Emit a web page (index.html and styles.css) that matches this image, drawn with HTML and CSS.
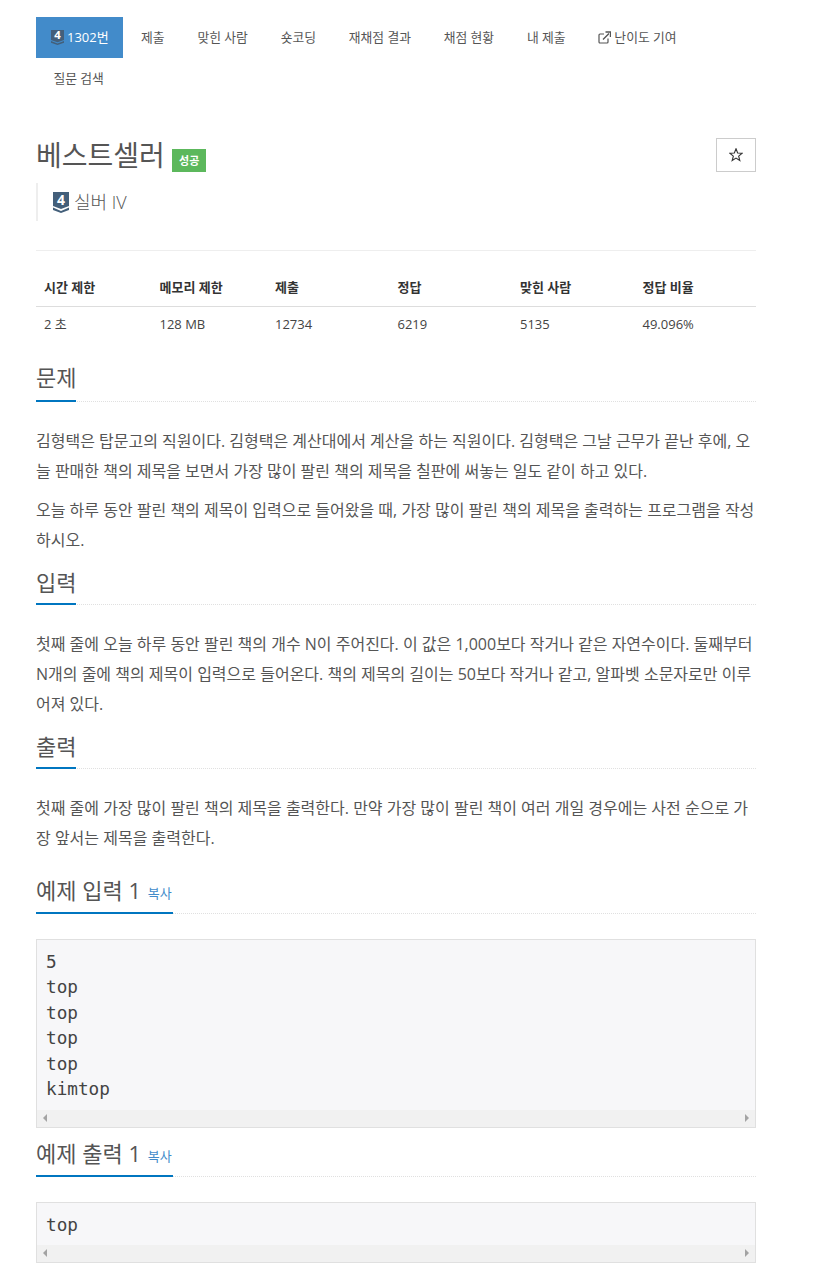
FILE: index.html
```html
<!DOCTYPE html>
<html lang="ko">
<head>
<meta charset="utf-8">
<title>베스트셀러</title>
<link rel="stylesheet" href="styles.css">
</head>
<body>
<div class="page">
  <ul class="nav">
    <li class="nav-item active"><svg class="tier tier-sm" viewBox="0 0 16 21" preserveAspectRatio="none"><path class="tier-body" d="M0 0H16V14L8 17L0 14Z"/><path class="tier-chev" d="M0 15.5L8 19L16 15.5V18L8 21L0 18Z"/><text class="tier-num" x="8" y="13">4</text></svg> 1302번</li>
    <li class="nav-item">제출</li>
    <li class="nav-item">맞힌 사람</li>
    <li class="nav-item">숏코딩</li>
    <li class="nav-item">재채점 결과</li>
    <li class="nav-item">채점 현황</li>
    <li class="nav-item">내 제출</li>
    <li class="nav-item"><svg class="ext" viewBox="0 0 13 13"><path d="M10 7.5V11a1 1 0 0 1-1 1H2a1 1 0 0 1-1-1V4a1 1 0 0 1 1-1h4" fill="none" stroke="currentColor" stroke-width="1.2"/><path d="M5 8.5L11 2.5M7.5 1H12.5V6" fill="none" stroke="currentColor" stroke-width="1.4"/></svg> 난이도 기여</li>
    <li class="nav-item">질문 검색</li>
  </ul>

  <header class="title-block">
    <div class="title-row">
      <h1 class="title">베스트셀러 <span class="badge">성공</span></h1>
      <button class="star" type="button" aria-label="즐겨찾기"><svg viewBox="0 0 14 14"><path d="M7 .8L8.65 5.03L13.18 5.29L9.66 8.17L10.82 12.56L7 10.1L3.18 12.56L4.34 8.17L.82 5.29L5.35 5.03Z" fill="none" stroke="#333" stroke-width="1.1"/></svg></button>
    </div>
    <div class="tier-line"><svg class="tier tier-lg" viewBox="0 0 16 21" preserveAspectRatio="none"><path class="tier-body" d="M0 0H16V14L8 17L0 14Z"/><path class="tier-chev" d="M0 15.5L8 19L16 15.5V18L8 21L0 18Z"/><text class="tier-num" x="8" y="13">4</text></svg><span class="tier-name">실버 IV</span></div>
  </header>

  <table class="info">
    <thead><tr><th class="c1">시간 제한</th><th class="c2">메모리 제한</th><th class="c3">제출</th><th class="c3">정답</th><th class="c3">맞힌 사람</th><th>정답 비율</th></tr></thead>
    <tbody><tr><td>2 초</td><td>128 MB</td><td>12734</td><td>6219</td><td>5135</td><td>49.096%</td></tr></tbody>
  </table>

  <section class="sec lead">
    <h2 class="head"><span class="head-text">문제</span></h2>
    <div class="body">
      <p>김형택은 탑문고의 직원이다. 김형택은 계산대에서 계산을 하는 직원이다. 김형택은 그날 근무가 끝난 후에, 오늘 판매한 책의 제목을 보면서 가장 많이 팔린 책의 제목을 칠판에 써놓는 일도 같이 하고 있다.</p>
      <p>오늘 하루 동안 팔린 책의 제목이 입력으로 들어왔을 때, 가장 많이 팔린 책의 제목을 출력하는 프로그램을 작성하시오.</p>
    </div>
  </section>
  <section class="sec">
    <h2 class="head"><span class="head-text">입력</span></h2>
    <div class="body">
      <p>첫째 줄에 오늘 하루 동안 팔린 책의 개수 N이 주어진다. 이 값은 1,000보다 작거나 같은 자연수이다. 둘째부터 N개의 줄에 책의 제목이 입력으로 들어온다. 책의 제목의 길이는 50보다 작거나 같고, 알파벳 소문자로만 이루어져 있다.</p>
    </div>
  </section>
  <section class="sec">
    <h2 class="head"><span class="head-text">출력</span></h2>
    <div class="body">
      <p>첫째 줄에 가장 많이 팔린 책의 제목을 출력한다. 만약 가장 많이 팔린 책이 여러 개일 경우에는 사전 순으로 가장 앞서는 제목을 출력한다.</p>
    </div>
  </section>
  <section class="sec sample first">
    <h2 class="head"><span class="head-text">예제 입력 1 <a class="copy">복사</a></span></h2>
    <div class="code">
      <pre>5
top
top
top
top
kimtop</pre>
      <div class="scroll"><i class="arr left"></i><i class="arr right"></i></div>
    </div>
  </section>
  <section class="sec sample">
    <h2 class="head"><span class="head-text">예제 출력 1 <a class="copy">복사</a></span></h2>
    <div class="code">
      <pre>top</pre>
      <div class="scroll"><i class="arr left"></i><i class="arr right"></i></div>
    </div>
  </section>
</div>
</body>
</html>
```
FILE: styles.css
```css
* { box-sizing: border-box; }
html, body { margin: 0; background: #fff; }
body {
  font-family: "Open Sans", "Noto Sans CJK KR", sans-serif;
  font-size: 13px;
  line-height: 1.42857;
  color: #333;
  overflow: hidden;
}
.page { width: 720px; margin-left: 36px; padding-top: 17px; }

.nav { list-style: none; margin: 0; padding: 0; display: flex; flex-wrap: wrap; }
.nav-item { height: 41px; margin-left: 2px; padding: 0 15.4px; color: #555; font-size: 12.8px; white-space: nowrap; display: flex; align-items: center; gap: 3px; }
.nav-item.active { margin-left: 0; margin-right: 1px; background: #428bca; color: #fff; padding: 0 14px 0 15px; font-size: 13px; }

.tier { display: block; flex: none; overflow: visible; }
.tier-sm { width: 13px; height: 15px; }
.tier-lg { width: 16px; height: 21px; }
.tier-body { fill: #435f7a; }
.tier-chev { fill: #435f7a; }
.tier-num { fill: #fff; font: bold 14px "Open Sans", sans-serif; text-anchor: middle; }
.ext { width: 13px; height: 13px; flex: none; }

.title-block { margin-top: 39px; padding-bottom: 29px; border-bottom: 1px solid #eee; }
.title-row { display: flex; justify-content: space-between; align-items: flex-start; }
.title { margin: 0; font-size: 28px; font-weight: 400; line-height: 34px; color: #555; }
.badge { display: inline-block; vertical-align: 1px; background: #5cb85c; color: #fff; font-size: 11px; font-weight: 700; line-height: 23px; height: 23px; padding: 0 7px; }
.star { width: 40px; height: 34px; padding: 0; background: #fff; border: 1px solid #ccc; display: flex; align-items: center; justify-content: center; }
.star svg { width: 14px; height: 14px; display: block; }
.tier-line { margin-top: 11px; height: 38px; border-left: 2px solid #eee; padding-left: 15px; display: flex; align-items: center; gap: 5px; font-size: 18px; font-weight: 300; color: #555; }
.tier-name { padding-top: 2px; }

.info { width: 100%; border-collapse: collapse; margin-top: 18px; table-layout: fixed; font-size: 13px; }
.info th { text-align: left; font-weight: 700; padding: 8px 8px 9px; height: 37px; line-height: 20px; border-bottom: 1px solid #ddd; color: #333; }
.info td { padding: 7px 8px 9px; line-height: 20px; height: 37px; color: #444; }
.c1 { width: 115.5px; }
.c2 { width: 115.5px; }
.c3 { width: 122.5px; }

.sec { margin-top: 0; }
.sec.lead { margin-top: 17px; }
.head { margin: 0; font-size: 22px; font-weight: 400; line-height: 30px; color: #555; border-bottom: 1px dotted #e0e0e0; height: 41px; }
.head-text { display: inline-block; height: 41px; padding-top: 3px; border-bottom: 2px solid #0076c0; }
.lead .head-text { padding-top: 1px; }
.sample .head-text { padding-top: 2px; }
.body { padding-top: 24px; font-size: 16px; line-height: 30px; color: #555; }
.body p { margin: 0 0 9px; }
.copy { font-size: 13px; color: #428bca; margin: 0 1px 0 1px; vertical-align: 1px; }

.sample.first { margin-top: 20px; }
.sample { margin-top: 8px; }
.code { margin-top: 25px; border: 1px solid #e0e0e0; background: #f7f7f9; }
.code pre { margin: 0; padding: 10px 9px 6.5px; font-family: "DejaVu Sans Mono", monospace; font-size: 17.7px; line-height: 25.6px; color: #444; }
.scroll { height: 17px; background: #f1f1f1; display: flex; justify-content: space-between; align-items: center; padding: 0 6px; }
.arr { width: 0; height: 0; border-top: 4px solid transparent; border-bottom: 4px solid transparent; }
.arr.left { border-right: 4px solid #a3a3a3; }
.arr.right { border-left: 4px solid #a3a3a3; }
```
